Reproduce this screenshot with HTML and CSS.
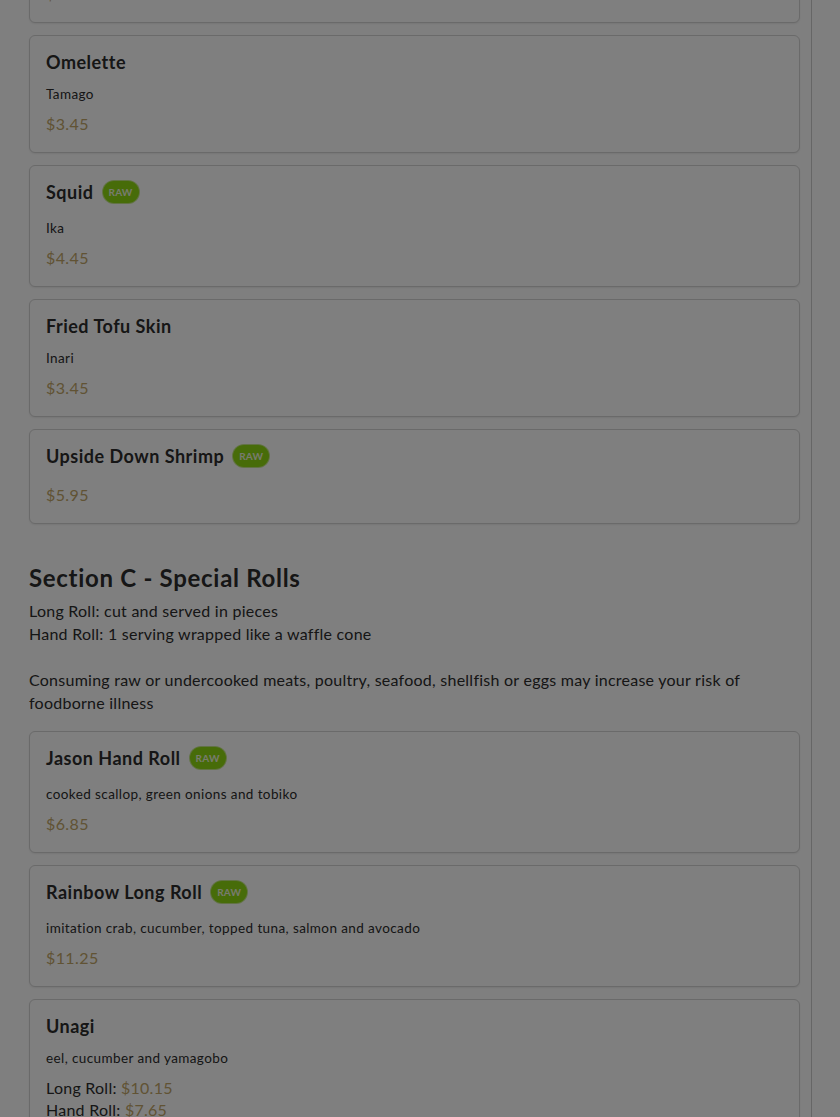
FILE: index.html
```html
<!DOCTYPE html>
<html lang="en">
<head>
<meta charset="utf-8">
<title>Menu</title>
<link rel="stylesheet" href="styles.css">
</head>
<body>
<div class="page">
  <main class="content">
    <div class="list first-list">
      <div class="card">
        <div class="title-row"><h3 class="title">Salmon Roe</h3></div>
        <p class="desc">Ikura</p>
        <p class="price">$4.95</p>
      </div>
      <div class="card">
        <div class="title-row"><h3 class="title">Omelette</h3></div>
        <p class="desc">Tamago</p>
        <p class="price">$3.45</p>
      </div>
      <div class="card">
        <div class="title-row tall"><h3 class="title">Squid</h3><span class="badge">RAW</span></div>
        <p class="desc">Ika</p>
        <p class="price">$4.45</p>
      </div>
      <div class="card">
        <div class="title-row"><h3 class="title">Fried Tofu Skin</h3></div>
        <p class="desc">Inari</p>
        <p class="price">$3.45</p>
      </div>
      <div class="card">
        <div class="title-row tall"><h3 class="title">Upside Down Shrimp</h3><span class="badge">RAW</span></div>
        <p class="price">$5.95</p>
      </div>
    </div>

    <section class="section">
      <h2 class="section-title">Section C - Special Rolls</h2>
      <p class="section-note">Long Roll: cut and served in pieces<br>Hand Roll: 1 serving wrapped like a waffle cone<br><br>Consuming raw or undercooked meats, poultry, seafood, shellfish or eggs may increase your risk of foodborne illness</p>
      <div class="list">
        <div class="card">
          <div class="title-row tall"><h3 class="title">Jason Hand Roll</h3><span class="badge">RAW</span></div>
          <p class="desc">cooked scallop, green onions and tobiko</p>
          <p class="price">$6.85</p>
        </div>
        <div class="card">
          <div class="title-row tall"><h3 class="title">Rainbow Long Roll</h3><span class="badge">RAW</span></div>
          <p class="desc">imitation crab, cucumber, topped tuna, salmon and avocado</p>
          <p class="price">$11.25</p>
        </div>
        <div class="card">
          <div class="title-row"><h3 class="title">Unagi</h3></div>
          <p class="desc">eel, cucumber and yamagobo</p>
          <p class="variant">Long Roll: <span class="price-inline">$10.15</span></p>
          <p class="variant">Hand Roll: <span class="price-inline">$7.65</span></p>
        </div>
      </div>
    </section>
  </main>
</div>
<div class="overlay"></div>
</body>
</html>
```
FILE: styles.css
```css
html, body {
  margin: 0;
  padding: 0;
  background: #ffffff;
  font-family: "Lato", "Noto Sans", sans-serif;
  color: #2c2c2c;
  overflow: hidden;
}

.page {
  width: 811px;
  border-right: 1px solid #cccccc;
  min-height: 1117px;
}

.content {
  padding: 0 11px 0 29px;
}

.list {
  display: flex;
  flex-direction: column;
  gap: 12px;
}

.first-list {
  margin-top: -95px;
}

.card {
  border: 1px solid #d4d4d4;
  border-radius: 6px;
  padding: 14px 16px 16px 16px;
  background: #ffffff;
  box-shadow: 0 1px 2px rgba(0, 0, 0, 0.08);
}

.title-row {
  display: flex;
  align-items: center;
  gap: 9px;
  height: 24px;
}

.title-row.tall {
  padding-bottom: 4px;
}

.title {
  margin: 0;
  font-size: 18px;
  font-weight: 700;
  line-height: 24px;
  letter-spacing: 0.5px;
  color: #2c2c2c;
}

.badge {
  display: inline-flex;
  align-items: center;
  justify-content: center;
  height: 22px;
  padding: 0 6px;
  border-radius: 11px;
  background: #8fd812;
  color: #eef6dc;
  font-size: 10px;
  font-weight: 700;
  letter-spacing: 0.2px;
  box-shadow: 0 0 0 1px #c4e68a;
}

.desc {
  margin: 11px 0 0;
  font-size: 13.5px;
  line-height: 18px;
  letter-spacing: 0.4px;
  color: #2c2c2c;
}

.price {
  margin: 9px 0 0;
  font-size: 16px;
  line-height: 24px;
  letter-spacing: 0.4px;
  color: #c2a668;
}

.title-row.tall + .price {
  margin-top: 11px;
}

.variant {
  margin: 10px 0 0;
  font-size: 16px;
  line-height: 22px;
  letter-spacing: 0.25px;
  color: #2c2c2c;
}

.variant + .variant {
  margin-top: 0;
}

.price-inline {
  color: #c2a668;
}

.section {
  margin-top: 39px;
}

.section-title {
  margin: 0;
  font-size: 24px;
  font-weight: 700;
  line-height: 30px;
  letter-spacing: 0.7px;
  color: #2c2c2c;
}

.section-note {
  margin: 6px 0 17px;
  font-size: 16px;
  line-height: 23px;
  letter-spacing: 0.25px;
  color: #2c2c2c;
}

.overlay {
  position: fixed;
  inset: 0;
  background: rgba(0, 0, 0, 0.5);
}
```
